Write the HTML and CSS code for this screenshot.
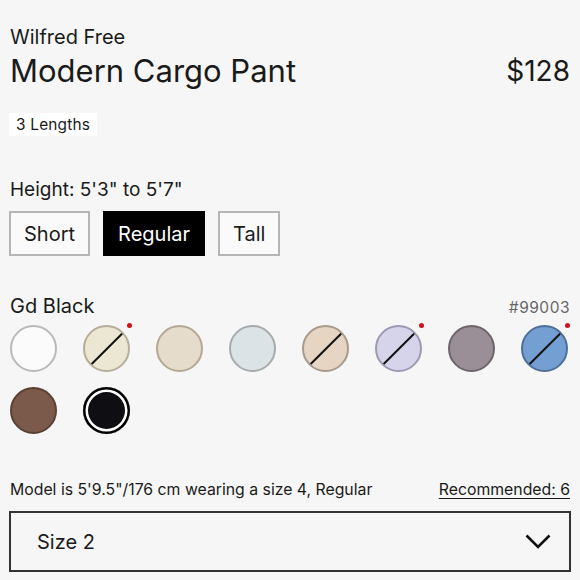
FILE: index.html
```html
<!DOCTYPE html>
<html>
<head>
<meta charset="utf-8">
<link rel="stylesheet" href="styles.css">
</head>
<body>
<div class="page">
  <div class="brand">Wilfred Free</div>
  <div class="title-row">
    <h1 class="title">Modern Cargo Pant</h1>
    <div class="price">$128</div>
  </div>
  <div class="tag-row"><span class="tag">3 Lengths</span></div>
  <div class="height">Height: 5'3" to 5'7"</div>
  <div class="lengths">
    <button class="len">Short</button>
    <button class="len active">Regular</button>
    <button class="len">Tall</button>
  </div>
  <div class="color-row">
    <span class="color-name">Gd Black</span>
    <span class="color-code">#99003</span>
  </div>
  <div class="swatches">
    <div class="sw"><span class="dot" style="background:#fbfbfb;border-color:#b9b9b9"></span></div>
    <div class="sw"><span class="dot slash" style="background:#ece7d3;border-color:#b5ad98"></span><span class="new"></span></div>
    <div class="sw"><span class="dot" style="background:#e6dccb;border-color:#b3a893"></span></div>
    <div class="sw"><span class="dot" style="background:#dce3e6;border-color:#a6abad"></span></div>
    <div class="sw"><span class="dot slash" style="background:#e6d5c3;border-color:#a89a8a"></span></div>
    <div class="sw"><span class="dot slash" style="background:#d6d4ea;border-color:#9c9ab2"></span><span class="new"></span></div>
    <div class="sw"><span class="dot" style="background:#9a8f96;border-color:#6e6469"></span></div>
    <div class="sw"><span class="dot slash" style="background:#739fd2;border-color:#4d6f99"></span><span class="new"></span></div>
    <div class="sw"><span class="dot" style="background:#7b5a4b;border-color:#5c4033"></span></div>
    <div class="sw selected"><span class="dot" style="background:#0f0e12;border-color:#0f0e12"></span></div>
  </div>
  <div class="model-row">
    <span class="model">Model is 5'9.5"/176 cm wearing a size 4, Regular</span>
    <a class="rec">Recommended: 6</a>
  </div>
  <div class="select">
    <span class="select-text">Size 2</span>
    <svg class="chev" width="26" height="15" viewBox="0 0 26 15"><path d="M1.5 1.5 L13 13 L24.5 1.5" fill="none" stroke="#111" stroke-width="2.6"/></svg>
  </div>
</div>
</body>
</html>
```
FILE: styles.css
```css
* { box-sizing: border-box; }
html, body { margin: 0; padding: 0; background: #f6f6f6; }
body { font-family: "Inter", "Liberation Sans", sans-serif; color: #1a1a1a; }
.page { padding: 25px 9px 0 9px; width: 580px; }
.brand { font-size: 20px; line-height: 24px; padding-left: 1px; }
.title-row { display: flex; justify-content: space-between; align-items: center; margin-top: 2px; }
.title { margin: 0; font-weight: 400; font-size: 31px; line-height: 40px; padding-left: 1px; }
.price { font-size: 28px; line-height: 40px; padding-right: 1px; }
.tag-row { margin-top: 22px; height: 23px; }
.tag { display: inline-block; background: #fff; font-size: 15.4px; line-height: 23px; padding: 0 7px; letter-spacing: 0.2px; }
.height { margin-top: 42px; font-size: 19px; line-height: 24px; padding-left: 1px; }
.lengths { display: flex; gap: 13px; margin-top: 9px; }
.len { font-family: inherit; font-size: 20px; height: 45px; padding: 0 13px; background: #fafafa; border: 2px solid #b5b5b5; color: #1a1a1a; border-radius: 0; }
.len.active { background: #000; border-color: #000; color: #fff; }
.color-row { display: flex; justify-content: space-between; align-items: baseline; margin-top: 38px; }
.color-name { font-size: 20px; line-height: 24px; padding-left: 1px; }
.color-code { font-size: 15.5px; color: #666; letter-spacing: 0.5px; padding-right: 1px; }
.swatches { display: grid; grid-template-columns: repeat(8, 47px); column-gap: 26px; row-gap: 15px; margin-top: 7px; padding-left: 1px; }
.sw { position: relative; width: 47px; height: 47px; }
.dot { display: block; width: 47px; height: 47px; border-radius: 50%; border: 2px solid; position: relative; overflow: hidden; }
.dot.slash::after { content: ""; position: absolute; left: 50%; top: 50%; width: 62px; height: 2.4px; background: #111; transform: translate(-50%, -50%) rotate(-45deg); }
.sw.selected .dot { border: none; box-shadow: inset 0 0 0 2.5px #000, inset 0 0 0 5px #fff; }
.new { position: absolute; right: -2px; top: -2px; width: 5px; height: 5px; border-radius: 50%; background: #d0121a; }
.model-row { display: flex; justify-content: space-between; align-items: baseline; margin-top: 46px; }
.model { font-size: 15.8px; padding-left: 1px; }
.rec { font-size: 15.8px; text-decoration: underline; text-underline-offset: 3px; padding-right: 1px; }
.select { display: flex; justify-content: space-between; align-items: center; margin-top: 12px; height: 61px; border: 2px solid #333; padding: 0 18px 0 26px; }
.select-text { font-size: 20px; }
```
